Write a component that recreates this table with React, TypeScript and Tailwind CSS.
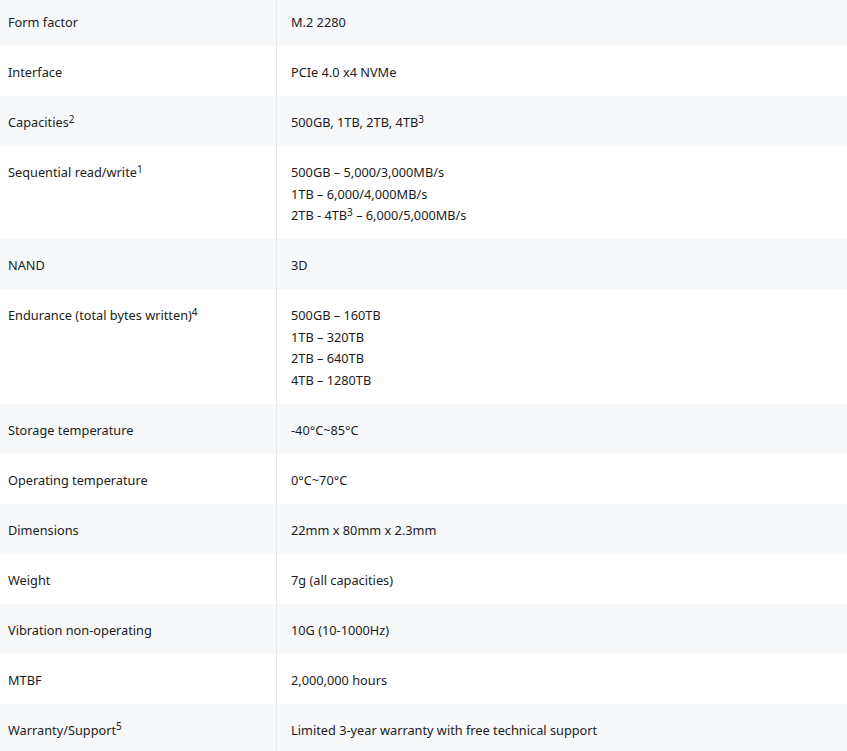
import React from 'react';

type Spec = { label: React.ReactNode; value: React.ReactNode[] };

const Sup = ({ n }: { n: string }) => (
  <sup className="text-[10px] relative top-[1px] align-super leading-none">{n}</sup>
);

const specs: Spec[] = [
  { label: 'Form factor', value: ['M.2 2280'] },
  { label: 'Interface', value: ['PCIe 4.0 x4 NVMe'] },
  { label: <>Capacities<Sup n="2" /></>, value: [<>500GB, 1TB, 2TB, 4TB<Sup n="3" /></>] },
  {
    label: <>Sequential read/write<Sup n="1" /></>,
    value: [
      '500GB – 5,000/3,000MB/s',
      '1TB – 6,000/4,000MB/s',
      <>2TB - 4TB<Sup n="3" /> – 6,000/5,000MB/s</>,
    ],
  },
  { label: 'NAND', value: ['3D'] },
  {
    label: <>Endurance (total bytes written)<Sup n="4" /></>,
    value: ['500GB – 160TB', '1TB – 320TB', '2TB – 640TB', '4TB – 1280TB'],
  },
  { label: 'Storage temperature', value: ['-40°C~85°C'] },
  { label: 'Operating temperature', value: ['0°C~70°C'] },
  { label: 'Dimensions', value: ['22mm x 80mm x 2.3mm'] },
  { label: 'Weight', value: ['7g (all capacities)'] },
  { label: 'Vibration non-operating', value: ['10G (10-1000Hz)'] },
  { label: 'MTBF', value: ['2,000,000 hours'] },
  { label: <>Warranty/Support<Sup n="5" /></>, value: ['Limited 3-year warranty with free technical support'] },
];

export default function App() {
  return (
    <div className="bg-white w-[847px] h-[751px] overflow-hidden font-['Noto_Sans','Open_Sans',sans-serif] text-[12.75px] text-[#1c1c1c]">
      {/* spec table, first row slightly cut off at the top */}
      <div className="-mt-[4px]">
        {specs.map((s, i) => (
          <div key={i} className={`flex ${i % 2 === 0 ? 'bg-[#f7f8fa]' : 'bg-white'}`}>
            <div className="w-[277px] shrink-0 pl-[8px] pr-3 pt-[16px] pb-[12.5px] leading-[21.5px] border-r border-[#e8e9eb]">
              {s.label}
            </div>
            <div className="flex-1 pl-[14px] pr-3 pt-[16px] pb-[12.5px] leading-[21.5px]">
              {s.value.map((v, j) => (
                <div key={j}>{v}</div>
              ))}
            </div>
          </div>
        ))}
      </div>
    </div>
  );
}
